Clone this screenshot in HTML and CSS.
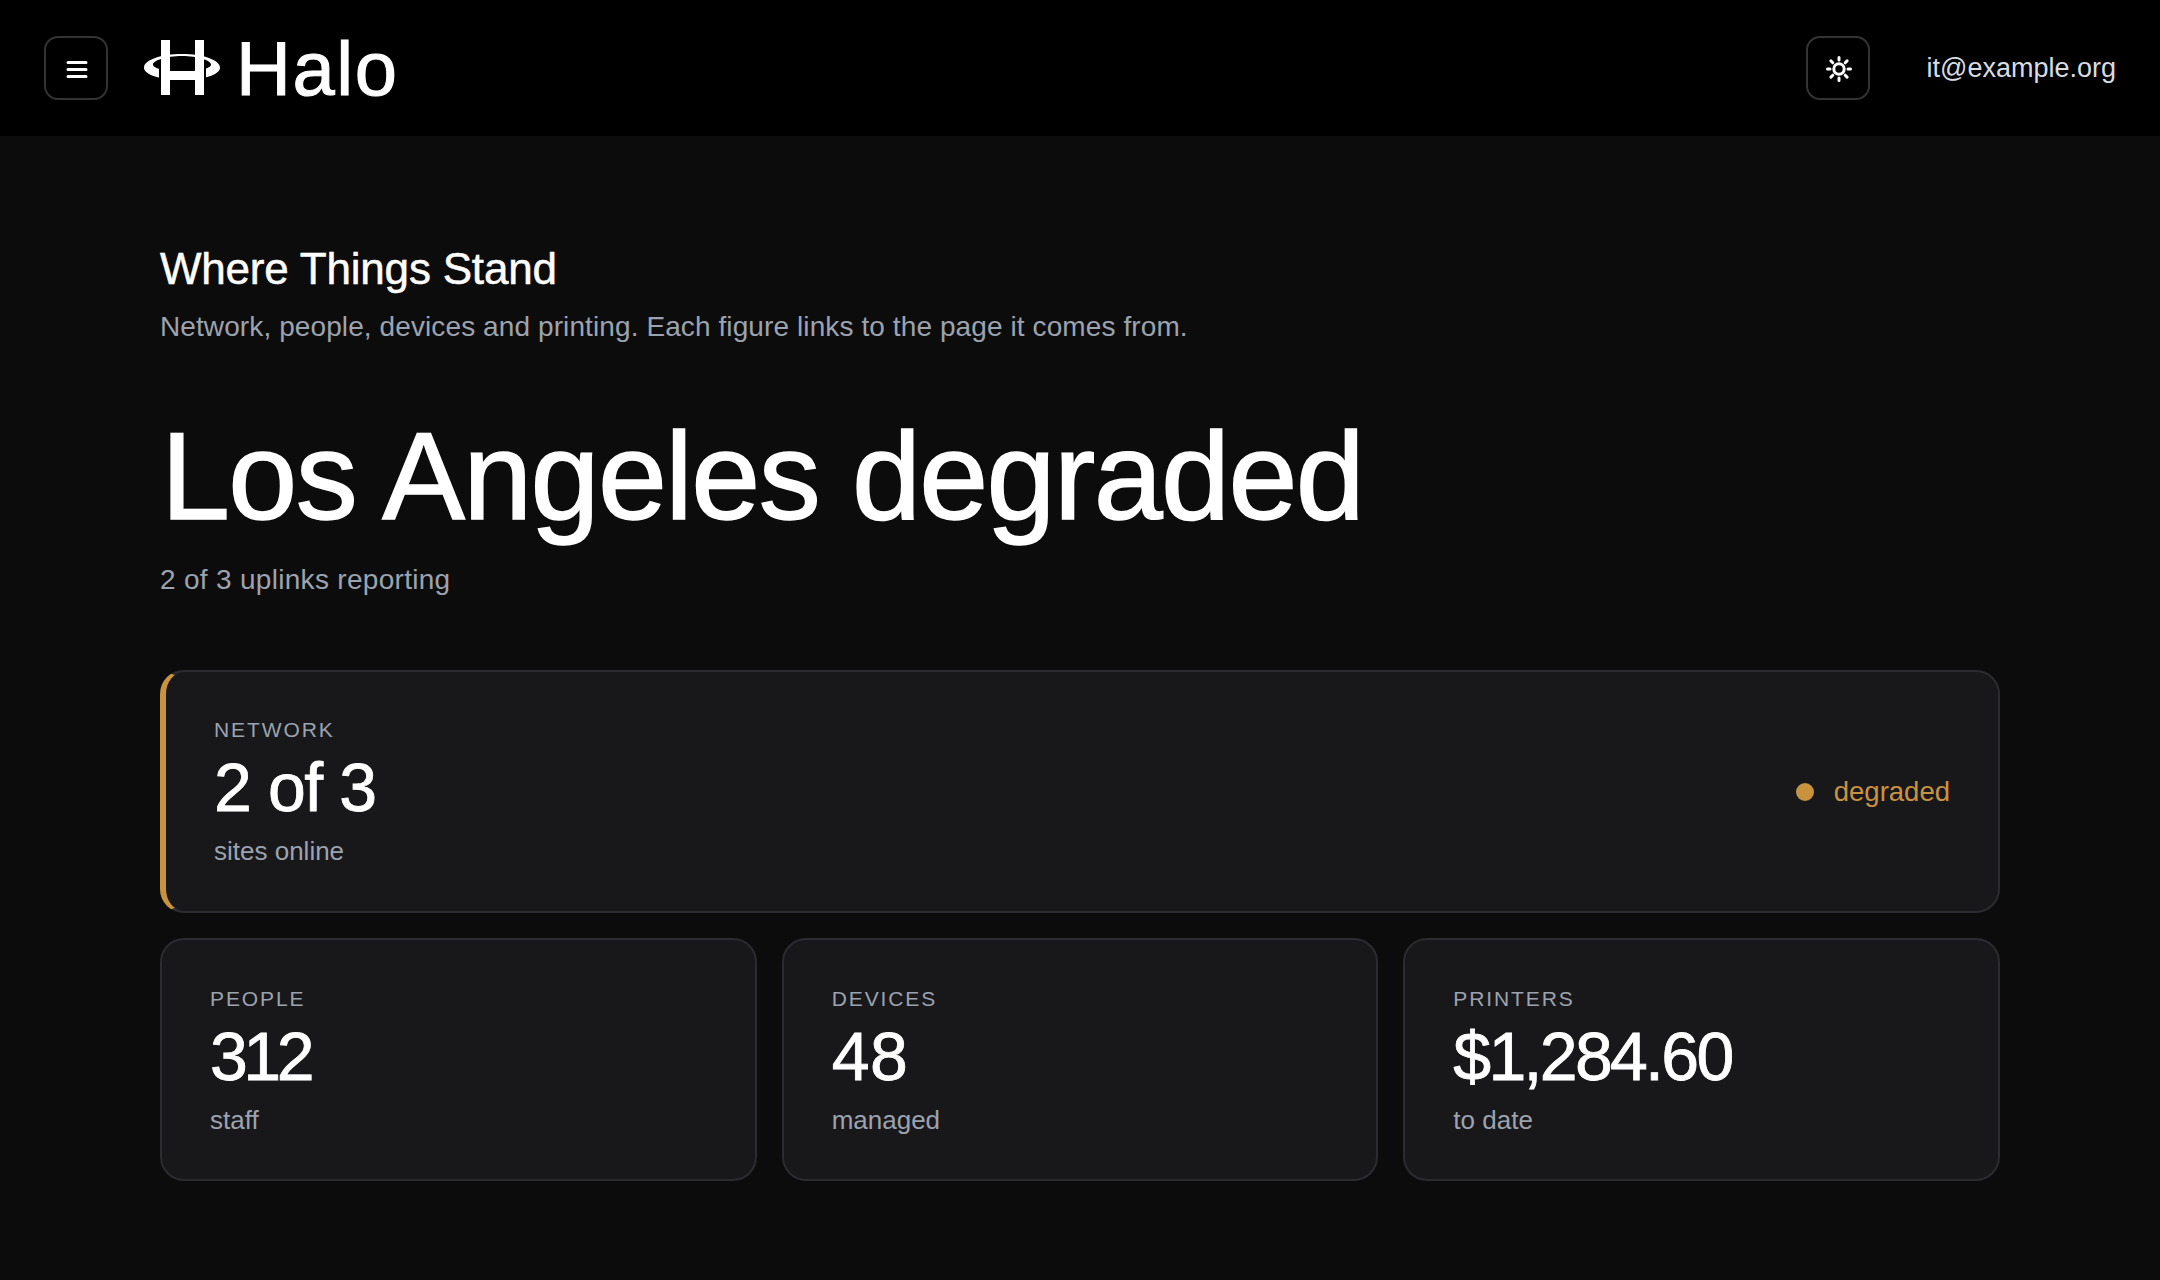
FILE: index.html
```html
<!DOCTYPE html>
<html lang="en">
<head>
<meta charset="utf-8">
<title>Halo</title>
<link rel="stylesheet" href="styles.css">
</head>
<body>
<header class="topbar">
  <div class="topbar-left">
    <button class="icon-btn" aria-label="Menu">
      <svg width="24" height="24" viewBox="-1 -1 24 24" fill="none" stroke="#fff" stroke-width="3" stroke-linecap="round"><path d="M3 5.500h18M3 12.500h18M3 19.500h18"/></svg>
    </button>
    <a class="brand" href="#">
      <svg class="brand-mark" width="78" height="56" viewBox="0 0 78 56" fill="none">
        <path fill-rule="evenodd" fill="#fff" d="M0 27.500C0 20 17 14 38 14s38 6 38 13.500S59 40 38 40 0 35 0 27.500ZM9 24.500C9 28.500 22 31.500 38 31.500S67 28.500 67 24.500 54 16 38 16 9 20.500 9 24.500Z"/>
        <path d="M15 26h2v14h-2zM60 26h2v14h-2z" fill="#000"/>
        <path d="M17 0h9v55h-9zM51 0h9v55h-9zM26 31h25v9H26z" fill="#fff"/>
      </svg>
      <span class="brand-name">Halo</span>
    </a>
  </div>
  <div class="topbar-right">
    <button class="icon-btn" aria-label="Theme">
      <svg width="28" height="28" viewBox="-1 -1 28 28" fill="none" stroke="#fff" stroke-width="3" stroke-linecap="round"><circle cx="14" cy="14" r="5.200"/><path d="M14 2.500v2.500M14 23v2.500M2.500 14h2.500M23 14h2.500M5.900 5.900l1.900 1.900M20.200 20.200l1.900 1.900M5.900 22.100l1.900-1.900M20.200 7.800l1.900-1.900"/></svg>
    </button>
    <span class="user">it@example.org</span>
  </div>
</header>
<main class="page">
  <h2 class="section-title">Where Things Stand</h2>
  <p class="section-sub">Network, people, devices and printing. Each figure links to the page it comes from.</p>
  <h1 class="headline">Los Angeles degraded</h1>
  <p class="headline-sub">2 of 3 uplinks reporting</p>
  <section class="card card-wide">
    <div>
      <div class="label">NETWORK</div>
      <div class="value">2 of 3</div>
      <div class="note">sites online</div>
    </div>
    <div class="status"><span class="dot"></span>degraded</div>
  </section>
  <section class="grid">
    <div class="card"><div class="label">PEOPLE</div><div class="value value-narrow">312</div><div class="note">staff</div></div>
    <div class="card"><div class="label">DEVICES</div><div class="value value-open">48</div><div class="note">managed</div></div>
    <div class="card"><div class="label">PRINTERS</div><div class="value value-tight">$1,284.60</div><div class="note">to date</div></div>
  </section>
</main>
</body>
</html>
```
FILE: styles.css
```css
* { box-sizing: border-box; }
html, body { margin: 0; height: 100%; }
body { background: #0c0c0c; color: #fff; font-family: "Liberation Sans", Arial, sans-serif; }
.topbar { height: 136px; background: #000; display: flex; align-items: center; justify-content: space-between; padding: 0 44px; }
.topbar-left, .topbar-right { display: flex; align-items: center; }
.topbar-right { gap: 57px; }
.icon-btn { width: 64px; height: 64px; border: 2px solid #333; border-radius: 14px; background: transparent; display: flex; align-items: center; justify-content: center; padding: 0; }
.brand { display: flex; align-items: center; gap: 14px; margin-left: 36px; color: #fff; text-decoration: none; }
.brand-name { font-size: 76px; letter-spacing: 1.600px; line-height: 76px; padding-top: 2px; -webkit-text-stroke: 1px #fff; }
.user { font-size: 27px; color: #d8dbe0; }
.page { padding: 105px 160px 0; }
.section-title { margin: 0; font-size: 44px; font-weight: 400; letter-spacing: -.2px; line-height: 56px; -webkit-text-stroke: .5px #fff; }
.section-sub { margin: 10px 0 0; font-size: 28px; letter-spacing: .1px; line-height: 40px; color: #9ca3af; }
.headline { margin: 57px 0 0 1px; font-size: 124px; font-weight: 400; letter-spacing: -1.6px; line-height: 144px; -webkit-text-stroke: 1.5px #fff; }
.headline-sub { margin: 12px 0 0; font-size: 28px; letter-spacing: .3px; line-height: 40px; color: #9ca3af; }
.card { background: #18181b; border: 2px solid #2c2c30; border-radius: 24px; padding: 43px 48px 0; height: 243px; }
.card-wide { margin-top: 70px; padding: 0 48px; display: flex; align-items: center; justify-content: space-between; border-left: 6px solid #c9923f; }
.grid { display: grid; grid-template-columns: repeat(3, 1fr); gap: 25px; margin-top: 25px; }
.label { font-size: 21px; letter-spacing: 1.900px; line-height: 32px; color: #9ca3af; margin-bottom: 3px; }
.value { font-size: 68px; line-height: 76px; letter-spacing: -1.4px; -webkit-text-stroke: .8px #fff; }
.value-narrow { letter-spacing: -4.500px; }
.value-tight { letter-spacing: -2.700px; }
.value-open { letter-spacing: .5px; }
.note { font-size: 26px; line-height: 36px; color: #9ca3af; margin-top: 8px; }
.status { display: flex; align-items: center; gap: 20px; font-size: 27.500px; padding-top: 1px; color: #c9923f; }
.dot { width: 18px; height: 18px; border-radius: 50%; background: #c9923f; }
```
